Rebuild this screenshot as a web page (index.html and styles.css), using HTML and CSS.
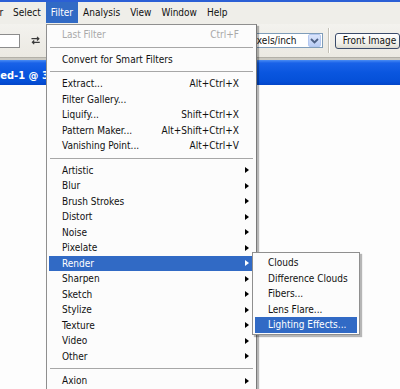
FILE: index.html
```html
<!DOCTYPE html>
<html>
<head>
<meta charset="utf-8">
<link rel="stylesheet" href="styles.css">
</head>
<body>
<div class="app">
  <div class="topstrip"></div>
  <nav class="menubar">
    <span class="mitem first">Layer</span>
    <span class="mitem">Select</span>
    <span class="mitem active">Filter</span>
    <span class="mitem">Analysis</span>
    <span class="mitem">View</span>
    <span class="mitem">Window</span>
    <span class="mitem">Help</span>
  </nav>
  <div class="options">
    <div class="field"></div>
    <svg class="swap" width="10" height="9" viewBox="0 0 10 9">
      <path d="M0.5 2.5H8.5M6.5 0.5L8.5 2.5L6.5 4.5" fill="none" stroke="#3a3a3a" stroke-width="1.3"/>
      <path d="M9.5 6.5H1.5M3.5 4.5L1.5 6.5L3.5 8.5" fill="none" stroke="#3a3a3a" stroke-width="1.3"/>
    </svg>
    <div class="select">
      <span class="select-text">pixels/inch</span>
      <span class="select-btn">
        <svg width="9" height="6" viewBox="0 0 9 6"><path d="M1 1L4.5 4.5L8 1" fill="none" stroke="#4d6185" stroke-width="1.8"/></svg>
      </span>
    </div>
    <div class="vsep"></div>
    <div class="btn">Front Image</div>
  </div>
  <div class="band"></div>
  <div class="titlebar"><span class="title-text">Untitled-1 @ 33.3% (RGB/8)</span></div>
  <div class="canvas"></div>
</div>

<div class="menu">
  <div class="mi disabled"><span class="lbl">Last Filter</span><span class="sc">Ctrl+F</span><span class="ar"></span></div>
  <div class="sep"></div>
  <div class="mi"><span class="lbl">Convert for Smart Filters</span><span class="sc"></span><span class="ar"></span></div>
  <div class="sep"></div>
  <div class="mi"><span class="lbl">Extract...</span><span class="sc">Alt+Ctrl+X</span><span class="ar"></span></div>
  <div class="mi"><span class="lbl">Filter Gallery...</span><span class="sc"></span><span class="ar"></span></div>
  <div class="mi"><span class="lbl">Liquify...</span><span class="sc">Shift+Ctrl+X</span><span class="ar"></span></div>
  <div class="mi"><span class="lbl">Pattern Maker...</span><span class="sc">Alt+Shift+Ctrl+X</span><span class="ar"></span></div>
  <div class="mi"><span class="lbl">Vanishing Point...</span><span class="sc">Alt+Ctrl+V</span><span class="ar"></span></div>
  <div class="sep"></div>
  <div class="mi"><span class="lbl">Artistic</span><span class="sc"></span><span class="ar"><i class="tri"></i></span></div>
  <div class="mi"><span class="lbl">Blur</span><span class="sc"></span><span class="ar"><i class="tri"></i></span></div>
  <div class="mi"><span class="lbl">Brush Strokes</span><span class="sc"></span><span class="ar"><i class="tri"></i></span></div>
  <div class="mi"><span class="lbl">Distort</span><span class="sc"></span><span class="ar"><i class="tri"></i></span></div>
  <div class="mi"><span class="lbl">Noise</span><span class="sc"></span><span class="ar"><i class="tri"></i></span></div>
  <div class="mi"><span class="lbl">Pixelate</span><span class="sc"></span><span class="ar"><i class="tri"></i></span></div>
  <div class="mi hl"><span class="lbl">Render</span><span class="sc"></span><span class="ar"><i class="tri"></i></span></div>
  <div class="mi"><span class="lbl">Sharpen</span><span class="sc"></span><span class="ar"><i class="tri"></i></span></div>
  <div class="mi"><span class="lbl">Sketch</span><span class="sc"></span><span class="ar"><i class="tri"></i></span></div>
  <div class="mi"><span class="lbl">Stylize</span><span class="sc"></span><span class="ar"><i class="tri"></i></span></div>
  <div class="mi"><span class="lbl">Texture</span><span class="sc"></span><span class="ar"><i class="tri"></i></span></div>
  <div class="mi"><span class="lbl">Video</span><span class="sc"></span><span class="ar"><i class="tri"></i></span></div>
  <div class="mi"><span class="lbl">Other</span><span class="sc"></span><span class="ar"><i class="tri"></i></span></div>
  <div class="sep"></div>
  <div class="mi"><span class="lbl">Axion</span><span class="sc"></span><span class="ar"><i class="tri"></i></span></div>
</div>

<div class="submenu">
  <div class="si">Clouds</div>
  <div class="si">Difference Clouds</div>
  <div class="si">Fibers...</div>
  <div class="si">Lens Flare...</div>
  <div class="si hl">Lighting Effects...</div>
</div>
</body>
</html>
```

FILE: styles.css
```css
html, body {
  margin: 0;
  padding: 0;
}
body {
  width: 400px;
  height: 389px;
  overflow: hidden;
  position: relative;
  background: #fdfdfd;
  font-family: "DejaVu Sans Condensed", "Liberation Sans", sans-serif;
  font-size: 10px;
  color: #111;
}
.app {
  display: flex;
  flex-direction: column;
  height: 389px;
}
.topstrip {
  height: 2px;
  background: #2b5fd5;
}
.menubar {
  height: 22px;
  background: #efeee9;
  display: flex;
  align-items: flex-start;
  white-space: nowrap;
}
.mitem {
  padding: 0 5px;
  height: 21px;
  line-height: 21px;
  color: #111;
}
.mitem.first {
  margin-left: -27px;
}
.mitem.active {
  background: #316ac5;
  color: #fff;
}
.options {
  height: 33px;
  background: linear-gradient(#f3f2ee, #ebe9e2);
  display: flex;
  align-items: center;
  white-space: nowrap;
}
.field {
  width: 22px;
  height: 14px;
  box-sizing: border-box;
  border: 1px solid #8c8c8c;
  border-left: none;
  background: #fff;
}
.swap {
  margin-left: 11px;
  display: block;
}
.select {
  margin-left: 204px;
  width: 84px;
  height: 15px;
  box-sizing: border-box;
  border: 1px solid #7f9db9;
  background: #fff;
  display: flex;
  align-items: center;
  justify-content: space-between;
  padding-left: 3px;
  padding-right: 1px;
}
.select-text {
  line-height: 13px;
}
.select-btn {
  width: 13px;
  height: 13px;
  box-sizing: border-box;
  border: 1px solid #b4c8f0;
  border-radius: 2px;
  background: linear-gradient(#dbe5fb, #b9cdf5);
  display: flex;
  align-items: center;
  justify-content: center;
}
.select-btn svg {
  display: block;
}
.vsep {
  margin-left: 5px;
  width: 1px;
  height: 25px;
  background: #c4c1b6;
  border-right: 1px solid #fff;
}
.btn {
  margin-left: 5px;
  width: 70px;
  height: 16px;
  box-sizing: border-box;
  border: 1px solid #3a4b6a;
  border-radius: 3px;
  background: linear-gradient(#ffffff, #efeee8 70%, #dcdad0);
  padding-left: 7px;
  line-height: 14px;
  color: #111;
}
.band {
  height: 3px;
  background: #cbc9c1;
  border-top: 1px solid #b2b0a8;
  box-sizing: border-box;
}
.titlebar {
  height: 25px;
  background: linear-gradient(#4a8cf4 0px, #1962e8 3px, #0a56df 50%, #0550d8 85%, #0346c9 100%);
  overflow: hidden;
  white-space: nowrap;
  display: flex;
  align-items: center;
}
.title-text {
  margin-left: -31px;
  margin-top: 5px;
  color: #fff;
  font-weight: bold;
  font-size: 11px;
}
.canvas {
  flex: 1;
  background: #fdfdfd;
}

/* main dropdown */
.menu {
  position: absolute;
  left: 46px;
  top: 24px;
  width: 211px;
  box-sizing: border-box;
  border: 1px solid #8f8f8f;
  border-right-color: #7a7a7a;
  background: #fcfcfc;
  padding: 2px 2px 14px;
  box-shadow: 2px 2px 1px rgba(0, 0, 0, 0.28);
}
.mi {
  display: grid;
  grid-template-columns: 1fr auto 15px;
  align-items: center;
  height: 15.5px;
  padding-left: 13px;
  white-space: nowrap;
  color: #111;
}
.mi.disabled {
  color: #a9a9a9;
}
.mi.hl {
  background: #316ac5;
  color: #fff;
}
.sc {
  text-align: right;
}
.ar {
  display: flex;
  align-items: center;
}
.tri {
  display: block;
  margin-left: 6px;
  width: 0;
  height: 0;
  border-left: 4px solid #000;
  border-top: 3.5px solid transparent;
  border-bottom: 3.5px solid transparent;
}
.mi.hl .tri {
  border-left-color: #fff;
}
.sep {
  height: 9px;
  display: flex;
  align-items: center;
  padding: 0 1px;
}
.sep::before {
  content: "";
  display: block;
  flex: 1;
  height: 1px;
  background: #a7a7a7;
}

/* submenu */
.submenu {
  position: absolute;
  left: 252px;
  top: 252px;
  width: 108px;
  box-sizing: border-box;
  border: 1px solid #8f8f8f;
  background: #fcfcfc;
  padding: 2px 2px 1px;
  box-shadow: 2px 2px 1px rgba(0, 0, 0, 0.28);
}
.si {
  height: 15.5px;
  line-height: 15.5px;
  padding-left: 13px;
  white-space: nowrap;
  color: #111;
}
.si.hl {
  background: #316ac5;
  color: #fff;
}
```
